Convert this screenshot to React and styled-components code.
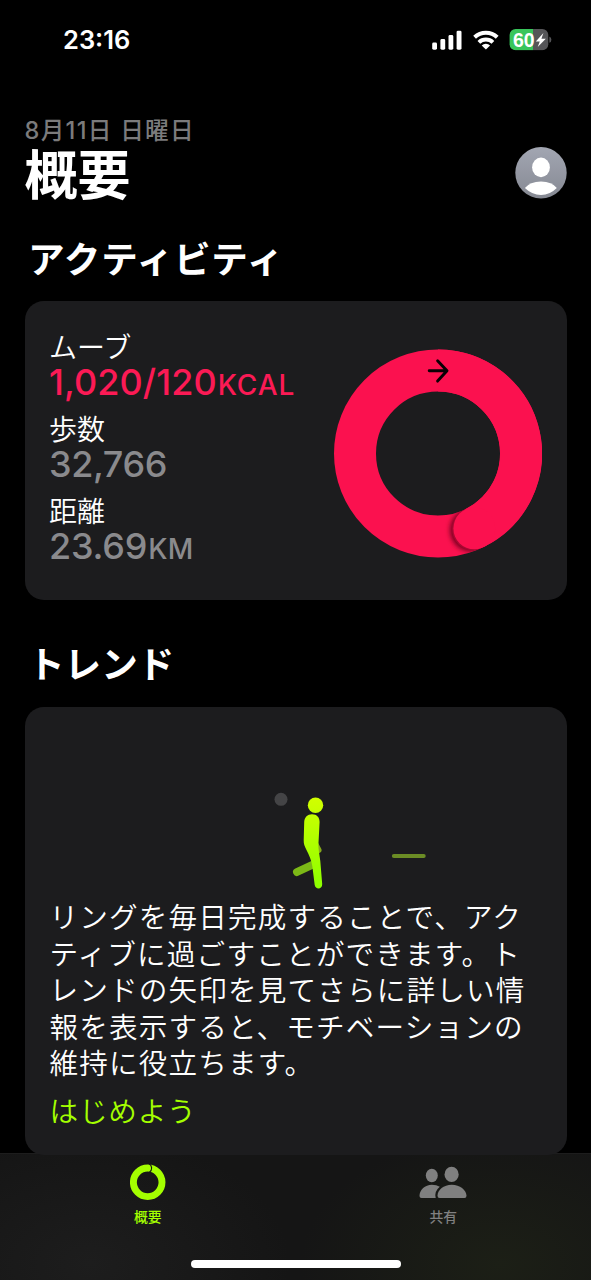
import React from "react";
import styled, { createGlobalStyle } from "styled-components";

const jp = `"Noto Sans CJK JP", sans-serif`;
const latin = `Inter, "Noto Sans CJK JP", sans-serif`;

const GlobalStyle = createGlobalStyle`
  * { box-sizing: border-box; }
  body { margin: 0; background: #000; }
`;

const Screen = styled.div`
  display: flex;
  flex-direction: column;
  width: 591px;
  height: 1280px;
  overflow: hidden;
  background: #000;
  color: #fff;
  font-family: ${jp};
  white-space: nowrap;
`;

const StatusBar = styled.header`
  display: flex;
  align-items: center;
  height: 79px;
  padding: 0 39px 0 63px;
  flex: none;
`;

const Time = styled.time`
  flex: 1;
  font: 600 25.5px/30px ${latin};
  letter-spacing: 0;
`;

const StatusIcons = styled.div`
  display: flex;
  align-items: center;
  gap: 10.4px;
`;

const Content = styled.main`
  display: flex;
  flex-direction: column;
  flex: none;
  height: 1075.5px;
  padding: 33px 24.5px 0;
  position: relative;
  z-index: 1;
`;

const TitleBar = styled.div`
  display: flex;
  align-items: flex-end;
  justify-content: space-between;
  height: 86.5px;
`;

const DateLine = styled.div`
  font-size: 23.6px;
  font-weight: 500;
  font-family: ${latin};
  line-height: 34px;
  height: 31px;
  color: #7b7b7c;
  letter-spacing: 1.3px;
`;

const Title = styled.h1`
  margin: 0;
  font-size: 53px;
  font-weight: 700;
  line-height: 54px;
`;

const SectionTitle = styled.h2`
  margin: 0;
  padding-left: ${(p) => p.$indent}px;
  height: ${(p) => p.$height}px;
  font-size: 36.6px;
  font-weight: 700;
  letter-spacing: ${(p) => p.$spacing}px;
  line-height: ${(p) => p.$line}px;
`;

const Card = styled.section`
  flex: none;
  height: ${(p) => p.$height}px;
  border-radius: 19px;
  background: #1c1c1e;
  padding: ${(p) => p.$padding};
`;

const ActivityBody = styled.div`
  display: flex;
  justify-content: space-between;
`;

const Stats = styled.dl`
  display: flex;
  flex-direction: column;
  gap: 12px;
  margin: 0;
`;

const Label = styled.dt`
  height: 34px;
  font-size: 28px;
  font-weight: 350;
  line-height: 33px;
`;

const Value = styled.dd`
  margin: 0;
  height: 36px;
  font: 500 36px/36px ${latin};
  letter-spacing: ${(p) => p.$spacing}px;
  color: ${(p) => p.$color};
`;

const Unit = styled.span`
  font-size: 28px;
  font-weight: 500;
  margin-left: 1px;
  letter-spacing: ${(p) => p.$spacing}px;
`;

const Paragraph = styled.p`
  margin: 0;
  font-size: 28.6px;
  font-weight: 350;
  line-height: 36.5px;
  letter-spacing: 1.15px;
`;

const StartLink = styled.a`
  display: block;
  margin-top: 10px;
  font-size: 28.6px;
  font-weight: 350;
  line-height: 37px;
  letter-spacing: 0.8px;
  color: #a4ff00;
`;

const TabBar = styled.nav`
  position: relative;
  display: grid;
  grid-template-columns: 1fr 1fr;
  flex: none;
  height: 127px;
  margin-top: -1.5px;
  border-top: 1px solid #1d1d1d;
  background:
    radial-gradient(ellipse 200px 130px at 500px 110px, #1c1f16, transparent),
    radial-gradient(ellipse 200px 130px at 90px 110px, #1d1d1d, transparent),
    #151515;
`;

const Tab = styled.div`
  display: flex;
  flex-direction: column;
  align-items: center;
  padding-top: 9px;
  color: ${(p) => (p.$active ? "#a4ff00" : "#808080")};
`;

const TabLabel = styled.span`
  margin-top: 5px;
  font-size: 13.8px;
  font-weight: 500;
  line-height: 20px;
`;

const HomeIndicator = styled.div`
  position: absolute;
  left: 190.5px;
  bottom: 12px;
  width: 210px;
  height: 8px;
  border-radius: 4px;
  background: #fff;
`;

const RingSlot = styled.div`
  padding-top: 18.5px;
`;

const BatteryText = styled.text`
  font: 700 19.5px "Liberation Sans", sans-serif;
  fill: #fff;
`;

function Signal() {
  return (
    <svg width="30" height="20" viewBox="432 29 30 20" fill="#fff">
      <rect x="432.2" y="41.5" width="4.8" height="7.2" rx="1.4" />
      <rect x="440.4" y="38" width="4.8" height="10.7" rx="1.4" />
      <rect x="448.5" y="34" width="4.8" height="14.7" rx="1.4" />
      <rect x="456.6" y="29.7" width="4.9" height="19" rx="1.4" />
    </svg>
  );
}

function Wifi() {
  return (
    <svg width="26" height="20" viewBox="473 29 26 20" fill="none" stroke="#fff" strokeWidth="4">
      <path d="M474.6 36.3 A16.4 16.4 0 0 1 497.2 36.3" />
      <path d="M478.9 41.4 A10.2 10.2 0 0 1 492.9 41.4" />
      <path d="M481.7 44.5 A6.2 6.2 0 0 1 490.1 44.5 L485.9 48.6Z" fill="#fff" stroke="none" />
    </svg>
  );
}

function Battery() {
  return (
    <svg width="43" height="22" viewBox="509 28.5 43 22">
      <defs>
        <clipPath id="cell">
          <rect x="509.6" y="28.5" width="38.7" height="21.2" rx="6" />
        </clipPath>
      </defs>
      <g clipPath="url(#cell)">
        <rect x="509" y="28" width="24" height="22" fill="#38c55b" />
        <rect x="533" y="28" width="16" height="22" fill="#555558" />
      </g>
      <path d="M549.3 36 Q551.4 36.7 551.4 39.2 T549.3 42.3Z" fill="#555558" />
      <BatteryText x="513" y="46">60</BatteryText>
      <path d="M543.4 32.6 L535.8 40.9 H539.8 L537.7 46.6 L545.8 38.2 H541.4Z" fill="#fff" />
    </svg>
  );
}

function Avatar() {
  return (
    <svg width="52" height="52" viewBox="0 0 52 52">
      <defs>
        <linearGradient id="avatar" x1="0" y1="0" x2="0" y2="1">
          <stop offset="0" stopColor="#a2a6b2" />
          <stop offset="1" stopColor="#868993" />
        </linearGradient>
      </defs>
      <circle cx="26" cy="25.8" r="25.7" fill="url(#avatar)" />
      <ellipse cx="26" cy="20.4" rx="8.9" ry="9.8" fill="#fff" />
      <path d="M9.9 41 Q15 34.4 26 34.4 T41.8 41 Q35 47.9 26 47.9 T9.9 41Z" fill="#fff" />
    </svg>
  );
}

function MoveRing() {
  return (
    <svg width="209" height="209" viewBox="333 348.5 209 209" fill="none">
      <defs>
        <clipPath id="band">
          <path clipRule="evenodd" d="M334 453a104 104 0 1 0 208 0a104 104 0 1 0 -208 0ZM376 453a62 62 0 1 1 124 0a62 62 0 1 1 -124 0Z" />
        </clipPath>
        <filter id="shade" x="-50%" y="-50%" width="200%" height="200%">
          <feGaussianBlur stdDeviation="2.6" />
        </filter>
      </defs>
      <circle cx="438" cy="453" r="83" stroke="#fb114f" strokeWidth="42" />
      <g clipPath="url(#band)">
        <circle cx="471.5" cy="529.5" r="21.4" fill="#70001f" filter="url(#shade)" />
        <circle cx="473.4" cy="528.5" r="21.4" fill="#a80832" />
      </g>
      <path d="M438 370A83 83 0 0 1 474.3 527.7" stroke="#fb114f" strokeWidth="42" />
      <circle cx="474.3" cy="527.9" r="20.9" fill="#fb114f" />
      <path d="M429.2 370.3H446.5M437.6 360.2L447 370.3L437.6 380.6" stroke="#090004" strokeWidth="2.9" strokeLinecap="round" strokeLinejoin="round" />
    </svg>
  );
}

function Walker() {
  return (
    <svg width="492" height="154" viewBox="50 744 492 154" display="block">
      <defs>
        <linearGradient id="body" gradientUnits="userSpaceOnUse" x1="0" y1="797" x2="0" y2="888">
          <stop offset="0" stopColor="#d2ff00" />
          <stop offset="1" stopColor="#8cff00" />
        </linearGradient>
      </defs>
      <circle cx="281" cy="799.3" r="6.5" fill="#444446" />
      <path d="M393.8 856H423.8" stroke="#6b8c25" strokeWidth="3.8" strokeLinecap="round" />
      <path d="M297 872L312 865" stroke="#7cb817" strokeWidth="8" strokeLinecap="round" />
      <path d="M314 842L318.3 850" stroke="#86a91b" strokeWidth="6.4" strokeLinecap="round" />
      <circle cx="315.5" cy="805.3" r="7.7" fill="url(#body)" />
      <path
        d="M304.2 822C304.5 817 307.5 814.2 312 814.2C316.8 814.2 319.8 817.5 319.6 822L318.4 845C318.3 849 319.5 855 320.3 861L322.2 884C322.6 889.5 315.4 890 314.7 885L312.3 866C311.5 860 309 855 306.5 850C304.5 846 303.6 844 303.7 840Z"
        fill="url(#body)"
      />
    </svg>
  );
}

function SummaryIcon() {
  return (
    <svg width="36" height="38" viewBox="130 1163 36 38" fill="none">
      <circle cx="147.7" cy="1182.3" r="14.3" stroke="currentColor" strokeWidth="6.9" />
      <path d="M149 1163.8C152.3 1165.3 152.6 1170.4 149.4 1172.3" stroke="#151515" strokeWidth="1.1" />
    </svg>
  );
}

function SharingIcon() {
  return (
    <svg width="48" height="38" viewBox="419.5 1163 48 38" fill="currentColor">
      <ellipse cx="432.3" cy="1175.5" rx="6" ry="6.7" />
      <ellipse cx="452.1" cy="1174.4" rx="7.1" ry="7.7" />
      <path d="M422 1198Q420 1198 420 1196C420 1190 425.5 1184.8 432.4 1184.8Q437 1184.8 440.3 1186.8Q434.5 1191.5 436.2 1198Z" />
      <path d="M440 1198Q438 1198 438 1195.8C438.2 1190 444 1184.8 452.3 1184.8C460.5 1184.8 466.6 1190 467 1195.8Q467 1198 465 1198Z" />
    </svg>
  );
}

export default function App() {
  return (
    <Screen>
      <GlobalStyle />
      <StatusBar>
        <Time>23:16</Time>
        <StatusIcons>
          <Signal />
          <Wifi />
          <Battery />
        </StatusIcons>
      </StatusBar>
      <Content>
        <TitleBar>
          <div>
            <DateLine>8月11日 日曜日</DateLine>
            <Title>概要</Title>
          </div>
          <Avatar />
        </TitleBar>
        <SectionTitle $height={102.5} $line={117} $indent={3.5} $spacing={0.9}>アクティビティ</SectionTitle>
        <Card $height={299} $padding="29px 24.5px 0">
          <ActivityBody>
            <Stats>
              <div>
                <Label>ムーブ</Label>
                <Value $color="#fb1a55" $spacing={0.05}>
                  1,020/120<Unit $spacing={0.9}>KCAL</Unit>
                </Value>
              </div>
              <div>
                <Label>歩数</Label>
                <Value $color="#8a8a8d" $spacing={-0.4}>32,766</Value>
              </div>
              <div>
                <Label>距離</Label>
                <Value $color="#8a8a8d" $spacing={-0.2}>
                  23.69<Unit $spacing={0.3}>KM</Unit>
                </Value>
              </div>
            </Stats>
            <RingSlot>
              <MoveRing />
            </RingSlot>
          </ActivityBody>
        </Card>
        <SectionTitle $height={107} $line={126} $indent={3.5} $spacing={0}>トレンド</SectionTitle>
        <Card $height={447.5} $padding="37px 25px 0">
          <Walker />
          <Paragraph>
            リングを毎日完成することで、アク<br />
            ティブに過ごすことができます。ト<br />
            レンドの矢印を見てさらに詳しい情<br />
            報を表示すると、モチベーションの<br />
            維持に役立ちます。
          </Paragraph>
          <StartLink>はじめよう</StartLink>
        </Card>
      </Content>
      <TabBar>
        <Tab $active>
          <SummaryIcon />
          <TabLabel>概要</TabLabel>
        </Tab>
        <Tab>
          <SharingIcon />
          <TabLabel>共有</TabLabel>
        </Tab>
        <HomeIndicator />
      </TabBar>
    </Screen>
  );
}
